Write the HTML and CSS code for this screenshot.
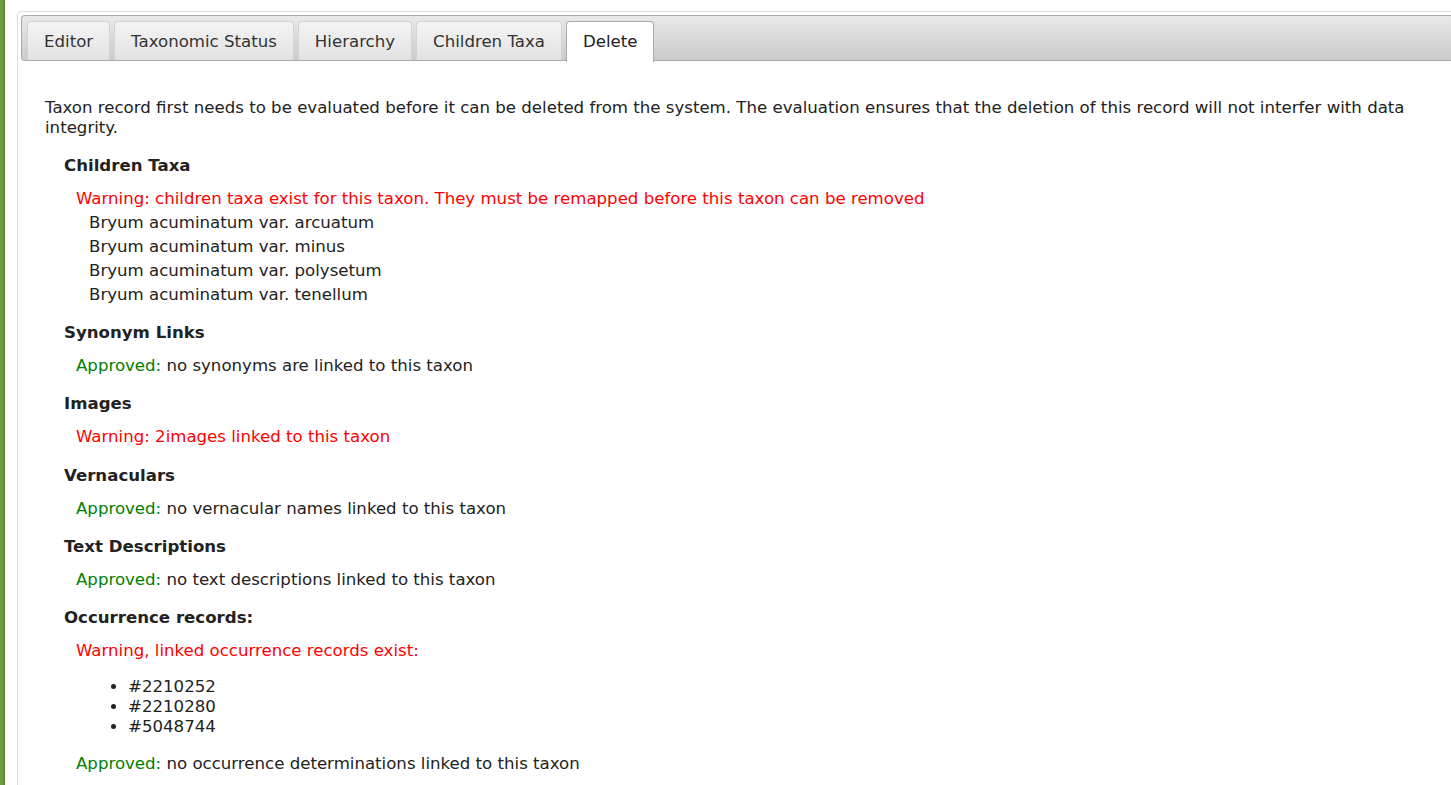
FILE: index.html
```html
<!DOCTYPE html>
<html lang="en">
<head>
<meta charset="utf-8">
<title>Taxon Editor - Delete</title>
<link rel="stylesheet" href="styles.css">
</head>
<body>
<div class="edge"></div>
<div class="main">
  <div class="tabs">
    <ul class="tabs-nav">
      <li class="tab"><a>Editor</a></li>
      <li class="tab"><a>Taxonomic Status</a></li>
      <li class="tab"><a>Hierarchy</a></li>
      <li class="tab"><a>Children Taxa</a></li>
      <li class="tab active"><a>Delete</a></li>
    </ul>
    <div class="panel">
      <p class="intro">Taxon record first needs to be evaluated before it can be deleted from the system. The evaluation ensures that the deletion of this record will not interfer with data integrity.</p>

      <div class="section">
        <div class="heading">Children Taxa</div>
        <div class="msg warn">Warning: children taxa exist for this taxon. They must be remapped before this taxon can be removed</div>
        <div class="child">Bryum acuminatum var. arcuatum</div>
        <div class="child">Bryum acuminatum var. minus</div>
        <div class="child">Bryum acuminatum var. polysetum</div>
        <div class="child">Bryum acuminatum var. tenellum</div>
      </div>

      <div class="section">
        <div class="heading">Synonym Links</div>
        <div class="msg"><span class="ok">Approved:</span> no synonyms are linked to this taxon</div>
      </div>

      <div class="section">
        <div class="heading">Images</div>
        <div class="msg warn">Warning: 2images linked to this taxon</div>
      </div>

      <div class="section">
        <div class="heading">Vernaculars</div>
        <div class="msg"><span class="ok">Approved:</span> no vernacular names linked to this taxon</div>
      </div>

      <div class="section">
        <div class="heading">Text Descriptions</div>
        <div class="msg"><span class="ok">Approved:</span> no text descriptions linked to this taxon</div>
      </div>

      <div class="section">
        <div class="heading">Occurrence records:</div>
        <div class="msg warn">Warning, linked occurrence records exist:</div>
        <ul class="records">
          <li>#2210252</li>
          <li>#2210280</li>
          <li>#5048744</li>
        </ul>
        <div class="msg last"><span class="ok">Approved:</span> no occurrence determinations linked to this taxon</div>
      </div>
    </div>
  </div>
</div>
</body>
</html>
```

FILE: styles.css
```css
html, body {
  margin: 0;
  padding: 0;
  overflow: hidden;
  background: #ffffff;
}

body {
  display: flex;
  align-items: stretch;
  min-height: 785px;
  font-family: "DejaVu Sans", Verdana, sans-serif;
  font-size: 16.6px;
  color: #222222;
}

.edge {
  flex: 0 0 4px;
  background: #6b9b45;
  border-right: 1px solid #4e7a30;
}

.main {
  flex: 0 0 auto;
  padding: 11px 0 0 12px;
}

.tabs {
  width: 1480px;
  border: 1px solid #dddddd;
  border-right: none;
  border-radius: 4px 0 0 0;
  padding: 3px 0 0 3px;
  min-height: 800px;
}

.tabs-nav {
  display: flex;
  margin: 0;
  padding: 5px 5px 0 5px;
  list-style: none;
  border: 1px solid #aaaaaa;
  border-right: none;
  border-radius: 4px 0 0 4px;
  background: linear-gradient(#e9e9e9, #cbcbcb);
  height: 39px;
}

.tab {
  margin: 0 4px 0 0;
  border: 1px solid #d3d3d3;
  border-bottom: none;
  border-radius: 4px 4px 0 0;
  background: linear-gradient(#f4f4f4, #e2e2e2);
}

.tab a {
  display: block;
  padding: 9px 16px 7px 16px;
  line-height: 22px;
  color: #333333;
  cursor: pointer;
}

.tab.active {
  background: #ffffff;
  border-color: #aaaaaa;
  height: 40px;
  position: relative;
  z-index: 1;
}

.tab.active a {
  color: #212121;
}

.panel {
  padding: 37px 28px 0 24px;
  width: 1440px;
  box-sizing: border-box;
}

.intro {
  margin: 0;
  line-height: 20px;
}

.section {
  padding-left: 19px;
  margin-top: 16.2px;
}

.section:first-of-type {
  margin-top: 18px;
}

.heading {
  font-weight: bold;
  line-height: 20px;
}

.msg {
  padding-left: 12px;
  line-height: 24px;
  margin-top: 11px;
}

.warn {
  color: #ff0000;
}

.ok {
  color: #008000;
}

.child {
  padding-left: 25px;
  line-height: 24px;
}

.records {
  margin: 14px 0 0 0;
  padding-left: 64px;
  line-height: 20px;
}

.msg.last {
  margin-top: 15px;
}
```
